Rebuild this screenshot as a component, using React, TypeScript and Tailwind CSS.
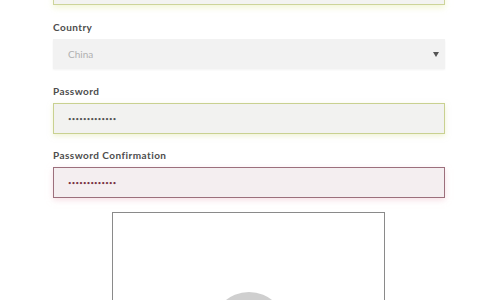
import React from "react";

const font = { fontFamily: "Lato, 'Open Sans', Arial, sans-serif" };

function Label({ children }: { children: React.ReactNode }) {
  return (
    <div className="h-[14px] leading-[14px] text-[10px] font-bold text-[#4d4d4d] tracking-[0.45px]">
      {children}
    </div>
  );
}

function Dots({ color }: { color: string }) {
  return (
    <span className="text-[6px] tracking-[0.25px] leading-none" style={{ color }}>
      •••••••••••••
    </span>
  );
}

export default function App() {
  return (
    <div className="w-[480px] h-[300px] overflow-hidden bg-white" style={font}>
      <div className="pl-[53px] w-[445px] flex flex-col">
        <div className="mt-[-26px] h-[31px] border border-[#cdd49a] bg-[#f3f3f1] shadow-[0_3px_6px_rgba(235,240,190,0.6)]" />
        <div className="mt-[15px]">
          <Label>Country</Label>
        </div>
        <div className="mt-[5px] h-[30px] bg-[#f2f2f2] shadow-[0_1px_2px_rgba(0,0,0,0.05)] flex items-center justify-between pl-[15px] pr-[6px]">
          <span className="text-[10px] text-[#b0b0b0]">China</span>
          <svg width="6" height="5" viewBox="0 0 6 5">
            <path d="M0 0 H6 L3 5 Z" fill="#555" />
          </svg>
        </div>
        <div className="mt-[15px]">
          <Label>Password</Label>
        </div>
        <div className="mt-[5px] h-[31px] border border-[#c9d190] bg-[#f2f2f0] shadow-[0_2px_5px_rgba(225,232,170,0.5)] flex items-center pl-[14px]">
          <Dots color="#555" />
        </div>
        <div className="mt-[14px]">
          <Label>Password Confirmation</Label>
        </div>
        <div className="mt-[5px] h-[31px] border border-[#9c6f7c] bg-[#f4eef0] shadow-[0_2px_6px_rgba(240,200,210,0.6)] flex items-center pl-[14px]">
          <Dots color="#7a3444" />
        </div>
        <div className="mt-[14px] ml-[59px] w-[273px] h-[120px] border border-[#8a8a8a] bg-white flex justify-center">
          <div className="mt-[79px] w-[74px] h-[74px] shrink-0 rounded-full bg-[#cfcfcf]" />
        </div>
      </div>
    </div>
  );
}
